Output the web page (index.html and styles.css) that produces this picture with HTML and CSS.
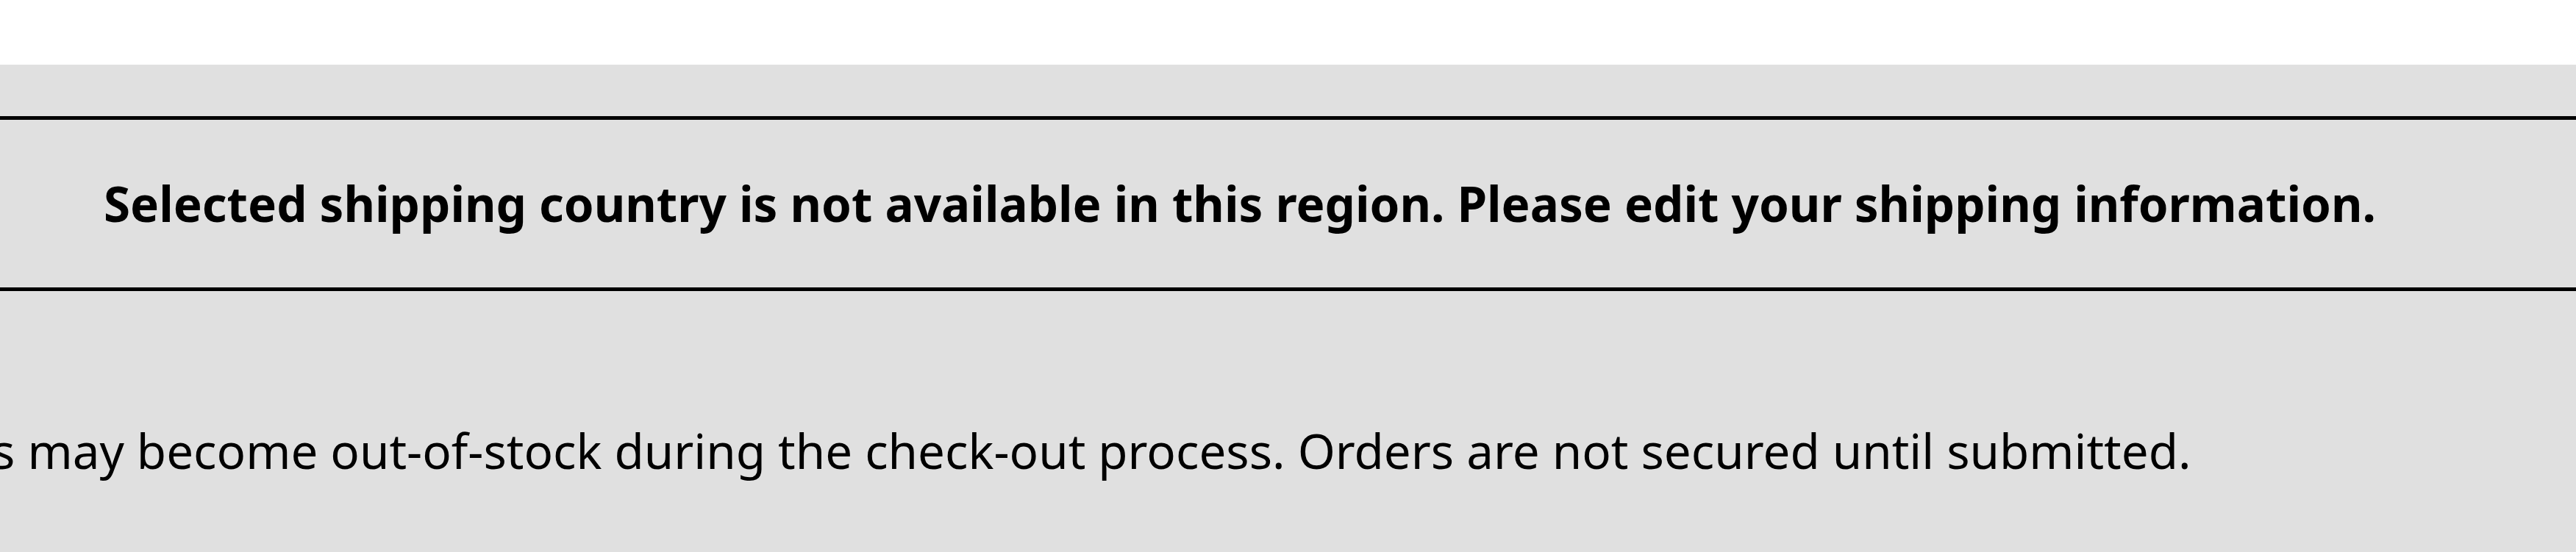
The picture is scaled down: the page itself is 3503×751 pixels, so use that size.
FILE: index.html
```html
<!DOCTYPE html>
<html lang="en">
<head>
<meta charset="utf-8">
<title>Checkout notice</title>
<link rel="stylesheet" href="styles.css">
</head>
<body>
<header class="topbar"></header>
<main class="page">
  <div class="alert">
    <p class="alert-text">Selected shipping country is not available in this region. Please edit your shipping information.</p>
  </div>
  <p class="note">Items may become out-of-stock during the check-out process. Orders are not secured until submitted.</p>
</main>
</body>
</html>
```

FILE: styles.css
```css
html, body {
  margin: 0;
  padding: 0;
}
body {
  width: 3503px;
  height: 751px;
  overflow: hidden;
  background: #e0e0e0;
  font-family: "Noto Sans", "Open Sans", sans-serif;
  color: #000;
}
.topbar {
  height: 88px;
  background: #ffffff;
}
.page {
  padding-top: 70px;
}
.alert {
  border-top: 5px solid #000;
  border-bottom: 5px solid #000;
  height: 228px;
  display: flex;
  align-items: center;
  padding-left: 141px;
}
.alert-text {
  margin: 0;
  font-size: 65.5px;
  font-weight: 700;
  line-height: 80px;
  white-space: nowrap;
}
.note {
  margin: 177px 0 0 -155px;
  font-size: 65.5px;
  line-height: 80px;
  white-space: nowrap;
}
```
